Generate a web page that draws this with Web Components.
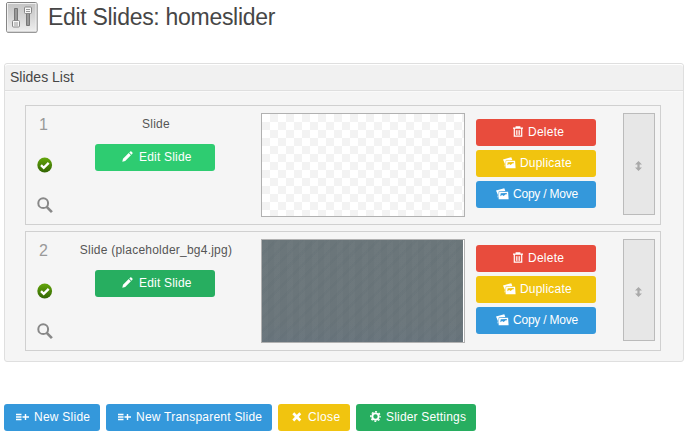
<!DOCTYPE html>
<html lang="en">
<head>
<meta charset="utf-8">
<title>Edit Slides</title>
<style>
html, body { margin: 0; background: #fff; }
body { font-family: "Liberation Sans", Arial, sans-serif; color: #444; width: 689px; height: 437px; overflow: hidden; }
</style>
</head>
<body>
<slider-app></slider-app>
<script>
const ICONS = {
  sliders: `<svg width="34" height="34" viewBox="0 0 34 34"><defs><linearGradient id="g" x1="0" y1="0" x2="0" y2="1"><stop offset="0" stop-color="#c4c4c4"/><stop offset=".5" stop-color="#d6d6d6"/><stop offset="1" stop-color="#efefef"/></linearGradient></defs><rect x="1.500" y="3" width="31" height="30" rx="2" fill="#aaa"/><rect x="1.500" y="2.500" width="30.500" height="29.500" rx="1.500" fill="url(#g)" stroke="#858585"/><rect x="2.500" y="3.500" width="28.500" height="27.500" fill="none" stroke="#f1f1f1"/><path d="M9.500 8.500h3v12h-3zM21.500 13.500h3v12h-3z" fill="#999" stroke="#777"/><rect x="7.500" y="20.500" width="7" height="6.500" rx="1" fill="#f7f7f7" stroke="#888"/><path d="M9 23h4M9 25h4" stroke="#999"/><rect x="19.500" y="7" width="7" height="6.500" rx="1" fill="#f7f7f7" stroke="#888"/><path d="M21 9.500h4M21 11.500h4" stroke="#999"/></svg>`,
  pencil: `<svg width="11" height="11" viewBox="0 0 11 11" fill="#fff"><path d="M0.300 10.700 1 7.800 6.700 2.100 8.900 4.300 3.200 10zM7.300 1.500 8.200.6Q8.800.1 9.400.6l1 1q.5.6 0 1.200l-.9.900z"/></svg>`,
  trash: `<svg width="10" height="11" viewBox="0 0 10 11"><path d="M0 2.200h10M3.200 2V.8h3.600V2M1.300 2.500v7.700h7.400V2.500" fill="none" stroke="#fff" stroke-width="1.200"/><path d="M3.400 4.200v4.700M5 4.200v4.700M6.600 4.200v4.700" stroke="#fff" stroke-width=".9"/></svg>`,
  images: `<svg width="13" height="12" viewBox="0 0 13 12"><path d="M0 2.500 8.300.2l1 2.900-6.600.5-.2 5.800-1-.2L1.900 7z" fill="#fff"/><path fill-rule="evenodd" d="m3.200 3.900 8.900-.2.500 7.500H2.600zM4.700 5.200l-.4 3 1.800-1.300 1.500 1.200 2.800-2.300.5 1.700-.1-2.400z" fill="#fff"/></svg>`,
  add: `<svg width="13" height="11" viewBox="0 0 13 11"><path d="M0 3.500h5.500M0 6h5.500M0 8.500h5.500M6.500 6H13M9.500 3v6" stroke="#fff" stroke-width="1.400" fill="none"/></svg>`,
  close: `<svg width="10" height="10" viewBox="0 0 10 10"><path d="m1.300 1.300 7 7.200m0-7.200-7 7.200" stroke="#fff" stroke-width="2.700"/></svg>`,
  gear: `<svg width="11" height="11" viewBox="0 0 11 11"><g fill="none" stroke="#fff"><circle cx="5.500" cy="5.500" r="3.150" stroke-width="1.900"/><circle cx="5.500" cy="5.500" r="4.650" stroke-width="1.500" stroke-dasharray="1.900 1.752" stroke-dashoffset=".95"/></g></svg>`,
  check: `<svg width="16" height="16" viewBox="0 0 16 16"><defs><linearGradient id="c" x1="0" y1="0" x2="0" y2="1"><stop offset="0" stop-color="#64a60b"/><stop offset="1" stop-color="#326503"/></linearGradient></defs><circle cx="7.700" cy="8" r="7.400" fill="url(#c)"/><path d="m4 8.200 2.700 2.600 5-5" fill="none" stroke="#fff" stroke-width="2.400"/></svg>`,
  search: `<svg width="16" height="17" viewBox="0 0 16 17" fill="none" stroke="#888"><circle cx="6.200" cy="6.200" r="4.900" stroke-width="2"/><path d="m9.700 9.900 5.200 5.200" stroke-width="2.700"/></svg>`,
  move: `<svg width="8" height="10" viewBox="0 0 8 10"><path d="M3.500 0 7 3.500H4.600v3H7L3.500 10 0 6.500h2.400v-3H0z" fill="#a9a9a9"/></svg>`
};

function define(name, render) {
  customElements.define(name, class extends HTMLElement {
    connectedCallback() {
      if (this.shadowRoot) return;
      this.attachShadow({ mode: "open" }).innerHTML = render(this);
    }
  });
}

define("ui-icon", el => `<style>:host{display:block;flex:none}svg{display:block}</style>${ICONS[el.getAttribute("name")]}`);

define("ui-button", el => {
  const a = (n, d) => el.getAttribute(n) ?? d;
  return `<style>
    :host{display:flex;align-items:center;box-sizing:border-box;flex:none;height:27px;width:${a("w", 120)}px;
      padding-left:${a("inset", 12)}px;gap:${a("gap", 5)}px;border-radius:3px;background:${a("color")};
      color:#fff;font-size:12px;line-height:26px;letter-spacing:${a("tracking", .2)}px;white-space:nowrap}
    span{height:27px}
    ui-icon{margin-bottom:2px}
  </style><ui-icon name="${a("icon")}"></ui-icon><span><slot></slot></span>`;
});

define("page-title", () => `<style>
  :host{display:flex;align-items:flex-start;padding-left:5px;height:63px}
  h1{margin:4px 0 0 9px;font-weight:400;font-size:23px;line-height:26px;letter-spacing:-.3px;color:#464646}
  </style><ui-icon name="sliders"></ui-icon><h1><slot></slot></h1>`);

define("ui-panel", el => `<style>
  :host{display:block;box-sizing:border-box;width:680px;height:299px;margin-left:4px;border:1px solid #dfdfdf;border-radius:3px;background:#f5f5f5}
  header{height:26px;border-bottom:1px solid #dfdfdf;background:#f1f1f1;box-shadow:inset 0 1px #fff,0 1px #fafafa;
    padding-left:5px;font-size:14px;line-height:27px;color:#464646;border-radius:3px 3px 0 0}
  section{display:grid;gap:6px;padding:14px 0 0 20px}
  </style><header>${el.getAttribute("heading")}</header><section><slot></slot></section>`);

define("slide-thumb", el => `<style>
  :host{display:block;box-sizing:border-box;width:204px;height:104px;border:1px solid #b1b1b1;background:#fff}
  div{height:102px;width:202px;background:repeating-conic-gradient(#f3f3f3 0 25%,#fff 0 50%) 0 0/16px 16px}
  .photo{width:201px;background:
    repeating-linear-gradient(135deg,rgba(80,95,103,.09) 0 3px,transparent 3px 9px),
    repeating-linear-gradient(90deg,rgba(255,255,255,.018) 0 6px,transparent 6px 12.500px),
    linear-gradient(#6b767a,#6a757a 80%,#68747c)}
  </style><div class="${el.getAttribute("kind")}"></div>`);

define("slide-row", el => `<style>
  :host{display:grid;grid-template-columns:36px 188px 11px 204px 11px 120px 27px 32px;box-sizing:border-box;
    width:636px;height:120px;border:1px solid #d0d0d0}
  .status{display:flex;flex-direction:column;padding-left:11px}
  .num{height:38px;padding:10px 0 0 2px;font-size:16px;line-height:18px;color:#999;box-sizing:border-box}
  .status ui-icon+ui-icon{margin-top:24px}
  .check{margin-top:13px}
  .info{display:flex;flex-direction:column;align-items:center;width:188px}
  .name{margin-top:11px;height:15px;font-size:12px;line-height:15px;color:#555;letter-spacing:.23px;white-space:nowrap}
  .info ui-button{margin:12px 2px 0 0}
  slide-thumb{grid-column:4;margin-top:7px}
  .actions{grid-column:6;display:flex;flex-direction:column;gap:4px;padding-top:13px}
  .handle{grid-column:8;display:grid;place-items:center;box-sizing:border-box;height:102px;margin-top:7px;padding-top:3px;
    border:1px solid #bbb;background:#e7e7e7}
  </style>
  <div class="status"><span class="num">${el.getAttribute("num")}</span><ui-icon class="check" name="check"></ui-icon><ui-icon name="search"></ui-icon></div>
  <div class="info"><span class="name"><slot></slot></span><ui-button color="${el.getAttribute("edit")}" icon="pencil" inset="27" gap="6">Edit Slide</ui-button></div>
  <slide-thumb kind="${el.getAttribute("kind")}"></slide-thumb>
  <div class="actions">
    <ui-button color="#e84c3d" icon="trash" inset="37" gap="5" tracking=".25">Delete</ui-button>
    <ui-button color="#f1c40f" icon="images" inset="27" gap="4">Duplicate</ui-button>
    <ui-button color="#3498db" icon="images" inset="20" gap="4" tracking="-.22">Copy / Move</ui-button>
  </div>
  <div class="handle"><ui-icon name="move"></ui-icon></div>`);

define("button-bar", () => `<style>:host{display:flex;gap:6px;padding:42px 0 0 4px}</style><slot></slot>`);

define("slider-app", () => `<style>:host{display:block}</style>
  <page-title>Edit Slides: homeslider</page-title>
  <ui-panel heading="Slides List">
    <slide-row num="1" kind="empty" edit="#2ecc71">Slide</slide-row>
    <slide-row num="2" kind="photo" edit="#27ae60">Slide (placeholder_bg4.jpg)</slide-row>
  </ui-panel>
  <button-bar>
    <ui-button color="#3498db" icon="add" w="96" tracking=".25">New Slide</ui-button>
    <ui-button color="#3498db" icon="add" w="166" tracking=".23">New Transparent Slide</ui-button>
    <ui-button color="#f1c40f" icon="close" w="72" inset="14" gap="6" tracking=".35">Close</ui-button>
    <ui-button color="#27ae60" icon="gear" w="120" inset="14" gap="5" tracking=".18">Slider Settings</ui-button>
  </button-bar>`);
</script>
</body>
</html>
